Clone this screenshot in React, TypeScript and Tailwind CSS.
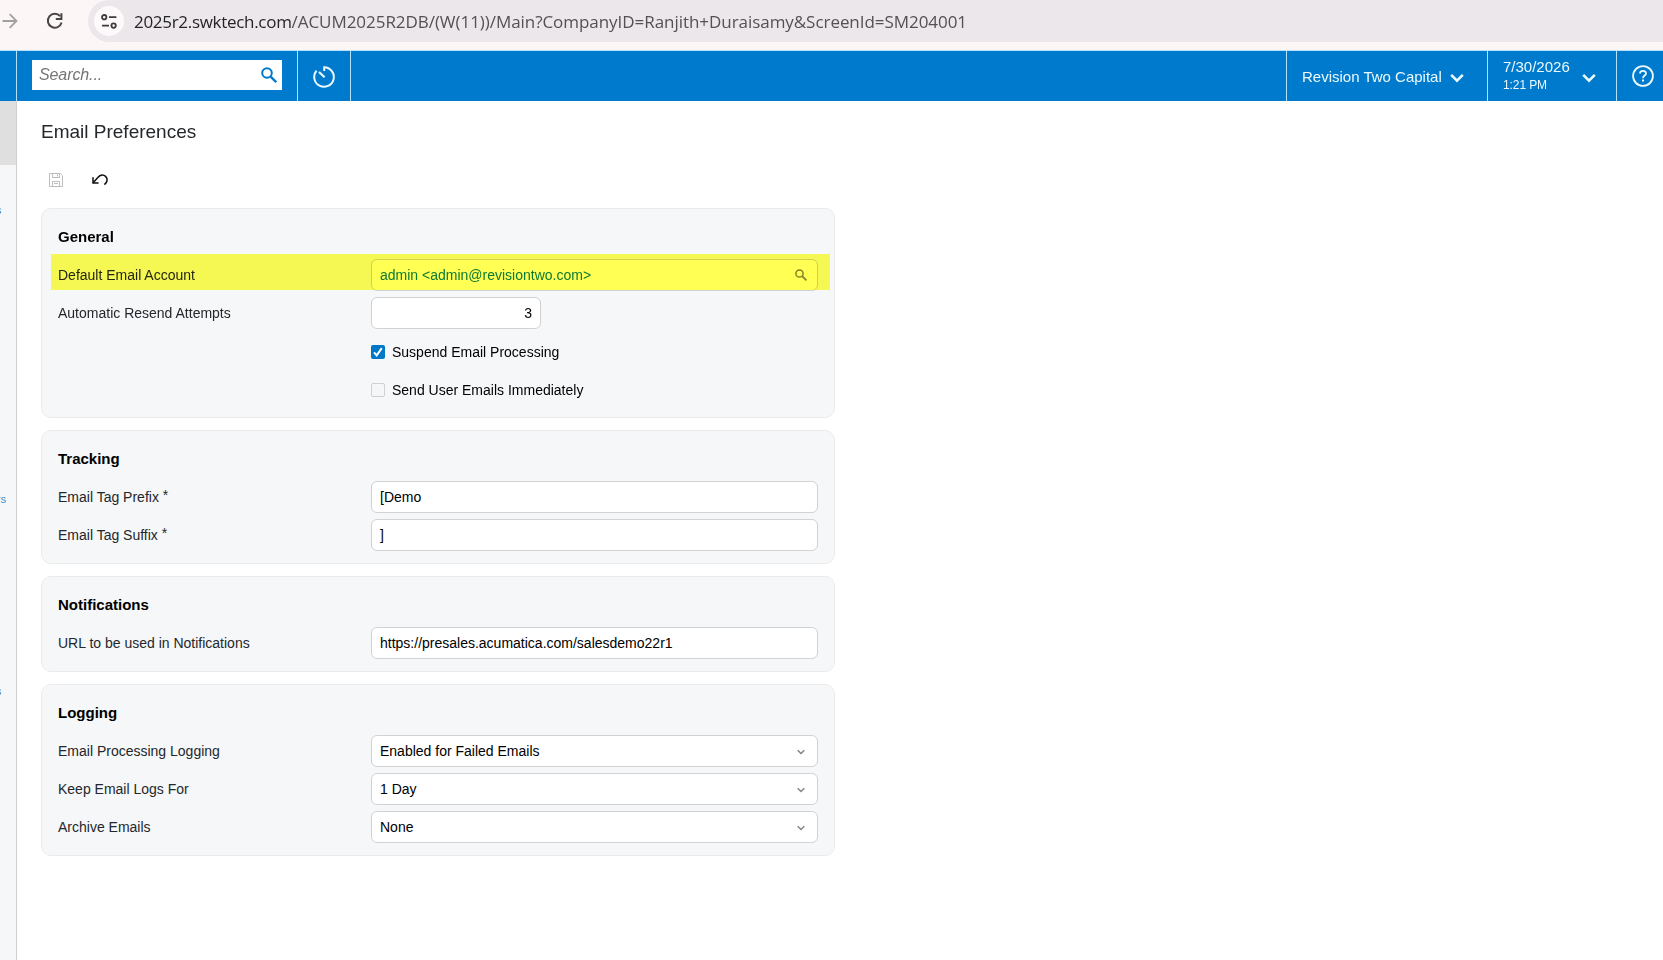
import type { ReactNode } from "react";

type IconProps = { className?: string };

function SearchIcon({ className }: IconProps) {
  return (
    <svg viewBox="0 0 16 16" fill="none" stroke="currentColor" strokeWidth="2" className={className}>
      <circle cx="6" cy="6" r="4.8" />
      <path d="M9.6 9.6L15.2 15.2" strokeWidth="2.3" />
    </svg>
  );
}

function ChevronIcon({ className }: IconProps) {
  return (
    <svg viewBox="0 0 14 10" fill="none" stroke="currentColor" strokeWidth="2.6" className={className}>
      <path d="M1.2 1.8L7 7.6L12.8 1.8" />
    </svg>
  );
}

function BrowserBar() {
  return (
    <div className="flex h-[50px] w-full items-start bg-[#fdf6f6]">
      <div className="flex h-[42px] w-[88px] shrink-0 items-center">
        <svg width="16" height="16" viewBox="0 0 16 16" fill="none" stroke="#a3a0a0" strokeWidth="1.8" className="ml-[2px]">
          <path d="M0.5 8H14.5M7.7 1.2L14.5 8L7.7 14.8" />
        </svg>
        <svg width="18" height="18" viewBox="0 0 18 18" fill="none" stroke="#474546" strokeWidth="2" className="ml-[28px]">
          <path d="M14.2 4.2A7 7 0 1 0 15.6 10.6" />
          <path d="M15.4 1.2V6.9H9.8" />
        </svg>
      </div>
      <div className="flex h-[42px] grow items-center rounded-l-full bg-[#ece7eb] pl-[6px]">
        <div className="flex h-[30px] w-[30px] items-center justify-center rounded-full bg-[#fdf8f9]">
          <svg width="16" height="15" viewBox="0 0 16 15" fill="none" stroke="#3c3b3c" strokeWidth="1.8">
            <circle cx="3.2" cy="3.2" r="2.2" />
            <path d="M8 3.2H15.4M1 11.6H8" />
            <circle cx="12.6" cy="11.6" r="2.2" />
          </svg>
        </div>
        <span className="ml-[10px] pt-px whitespace-nowrap font-['Open_Sans',sans-serif] text-[17px] tracking-[-0.05px] text-[#545153]">
          <span className="tracking-[-0.3px] text-[#252425]">2025r2.swktech.com</span>
          /ACUM2025R2DB/(W(11))/Main?CompanyID=Ranjith+Duraisamy&amp;ScreenId=SM204001
        </span>
      </div>
    </div>
  );
}

function TopNav() {
  return (
    <header className="flex h-[51px] w-full border-t border-[#b5e2fa] bg-[#007acc] text-[15px] text-[#eafaff]">
      <div className="w-[17px] border-r border-[#b5e2fa]" />
      <div className="flex w-[281px] items-start border-r border-[#b5e2fa] pt-[9px] pl-[15px]">
        <div className="flex h-[30px] w-[250px] items-center justify-between bg-white pr-[5px] pl-[7px]">
          <span className="pb-px text-[16px] tracking-[-0.1px] text-[#757575] italic">Search...</span>
          <SearchIcon className="h-4 w-4 text-[#007acc]" />
        </div>
      </div>
      <div className="flex w-[53px] items-center justify-center border-r border-[#b5e2fa]">
        <svg width="24" height="24" viewBox="0 0 24 24" fill="none" stroke="currentColor" strokeWidth="2" className="mt-px">
          <path d="M12.2 6V2.2A9.8 9.8 0 1 1 4.6 5.6" />
          <path d="M7 7L12.6 12.2" strokeWidth="2.2" />
        </svg>
      </div>
      <div className="grow" />
      <div className="flex w-[202px] items-center border-x border-[#b5e2fa] pl-[15px]">
        <span className="pt-[2px] whitespace-nowrap">Revision Two Capital</span>
        <ChevronIcon className="mt-[3px] ml-[8px] h-[10px] w-[14px]" />
      </div>
      <div className="flex w-[129px] items-center border-r border-[#b5e2fa] pl-[15px]">
        <div className="w-[66px]">
          <div className="text-[15px] leading-[18px]">7/30/2026</div>
          <div className="text-[12px] leading-[18px] tracking-[-0.1px]">1:21 PM</div>
        </div>
        <ChevronIcon className="mt-[3px] ml-[13px] h-[10px] w-[14px]" />
      </div>
      <div className="flex w-[46px] items-center pl-[15px]">
        <svg width="22" height="22" viewBox="0 0 22 22" fill="none" stroke="currentColor" strokeWidth="1.8">
          <circle cx="11" cy="11" r="9.9" />
          <path d="M8 8.6C8 6.8 9.3 5.8 11 5.8S14 6.9 14 8.4C14 10.6 11 10.6 11 13.2" />
          <path d="M11 14.6V16.6" strokeWidth="2" />
        </svg>
      </div>
    </header>
  );
}

function Sidebar() {
  return (
    <aside className="flex w-[17px] shrink-0 flex-col overflow-hidden border-r border-[#cfcfd1] bg-[#f5f7f9] text-[11px] leading-[12px] text-[#3b8fc9]">
      <div className="h-[64px] shrink-0 bg-[#dfdfdf]" />
      <span className="mt-[39px] -ml-[4px]">s</span>
      <span className="mt-[277px] -ml-[3px]">rs</span>
      <span className="mt-[180px] -ml-[4px]">s</span>
    </aside>
  );
}

function Card({ title, children }: { title: string; children: ReactNode }) {
  return (
    <section className="relative w-[794px] rounded-[10px] border border-[#eaebec] bg-[#f5f7f9] px-4 py-[9px]">
      <h2 className="flex h-[38px] items-center text-[15px] font-bold text-black">{title}</h2>
      {children}
    </section>
  );
}

function Row({ label, required, children }: { label?: string; required?: boolean; children: ReactNode }) {
  return (
    <div className="flex h-[38px] items-center text-[14px]">
      <div className="w-[313px] text-[#24272b]">
        {label}
        {required && <span className="relative -top-[2px]"> *</span>}
      </div>
      {children}
    </div>
  );
}

function Field({ value, icon }: { value: string; icon?: ReactNode }) {
  return (
    <div className="flex h-8 w-[447px] items-center justify-between rounded-md border border-[#d0d3d6] bg-white pr-[10px] pl-2 text-black">
      <span>{value}</span>
      {icon}
    </div>
  );
}

function Checkbox({ label, checked }: { label: string; checked?: boolean }) {
  return (
    <div className="flex items-center gap-[7px] pt-[2px] text-black">
      {checked ? (
        <span className="flex h-[14px] w-[14px] items-center justify-center rounded-[2px] bg-[#0078c8]">
          <svg width="12" height="12" viewBox="0 0 12 12" fill="none" stroke="white" strokeWidth="2">
            <path d="M2 6.4L4.7 9.4L9.8 2.2" />
          </svg>
        </span>
      ) : (
        <span className="h-[14px] w-[14px] rounded-[2px] border border-[#d0d0d0] bg-[#f5f6f7]" />
      )}
      <span>{label}</span>
    </div>
  );
}

const loggingFields = [
  { label: "Email Processing Logging", value: "Enabled for Failed Emails" },
  { label: "Keep Email Logs For", value: "1 Day" },
  { label: "Archive Emails", value: "None" },
];

export default function App() {
  return (
    <div className="flex h-[960px] w-[1663px] flex-col overflow-hidden bg-white font-['Liberation_Sans',Arial,sans-serif]">
      <BrowserBar />
      <TopNav />
      <div className="flex grow">
        <Sidebar />
        <main className="pl-6">
          <h1 className="mt-[19px] text-[19px] leading-[24px] text-[#24272b]">Email Preferences</h1>

          {/* Toolbar */}
          <div className="mt-[24px] flex h-[24px] items-center">
            <svg width="14" height="14" viewBox="0 0 14 14" fill="none" stroke="#bdbdbd" className="ml-[8px]">
              <path d="M0.5 0.5H11.5L13.5 2.5V13.5H0.5Z" />
              <path d="M3.5 0.5V4.5H10.5V0.5M8.5 1.5V3.5M3.5 13.5V8.5H10.5V13.5M5 10.5H9" />
            </svg>
            <svg width="18" height="14" viewBox="0 0 18 14" fill="none" stroke="#111" strokeWidth="1.5" className="ml-[28px]">
              <path d="M2 4.2V10H7.6" />
              <path d="M2.2 9.8L6.8 4.5C9.5 1.2 12.6 1.5 14.6 3.4C17.2 6 16.4 9 13.4 11.6" />
            </svg>
          </div>

          <div className="mt-4 flex flex-col gap-3">
            <Card title="General">
              <Row label="Default Email Account">
                <div className="flex h-8 w-[447px] items-center justify-between rounded-md border border-[#d0d3d6] bg-white pr-[10px] pl-2 text-[#0c7a9c]">
                  <span>admin &lt;admin@revisiontwo.com&gt;</span>
                  <SearchIcon className="h-3 w-3 text-[#808080]" />
                </div>
              </Row>
              <Row label="Automatic Resend Attempts">
                <div className="flex h-8 w-[170px] items-center justify-end rounded-md border border-[#d0d3d6] bg-white pr-2 text-black">
                  3
                </div>
              </Row>
              <Row>
                <Checkbox label="Suspend Email Processing" checked />
              </Row>
              <Row>
                <Checkbox label="Send User Emails Immediately" />
              </Row>
              {/* Marker stroke over the account row */}
              <div className="absolute top-[45px] left-[9px] h-[36px] w-[779px] bg-[#ffff54] mix-blend-multiply" />
            </Card>

            <Card title="Tracking">
              <Row label="Email Tag Prefix" required>
                <Field value="[Demo" />
              </Row>
              <Row label="Email Tag Suffix" required>
                <Field value="]" />
              </Row>
            </Card>

            <Card title="Notifications">
              <Row label="URL to be used in Notifications">
                <Field value="https://presales.acumatica.com/salesdemo22r1" />
              </Row>
            </Card>

            <Card title="Logging">
              {loggingFields.map((field) => (
                <Row key={field.label} label={field.label}>
                  <Field
                    value={field.value}
                    icon={<ChevronIcon className="mt-px mr-[2px] h-[6px] w-[8px] text-[#858585]" />}
                  />
                </Row>
              ))}
            </Card>
          </div>
        </main>
      </div>
    </div>
  );
}
